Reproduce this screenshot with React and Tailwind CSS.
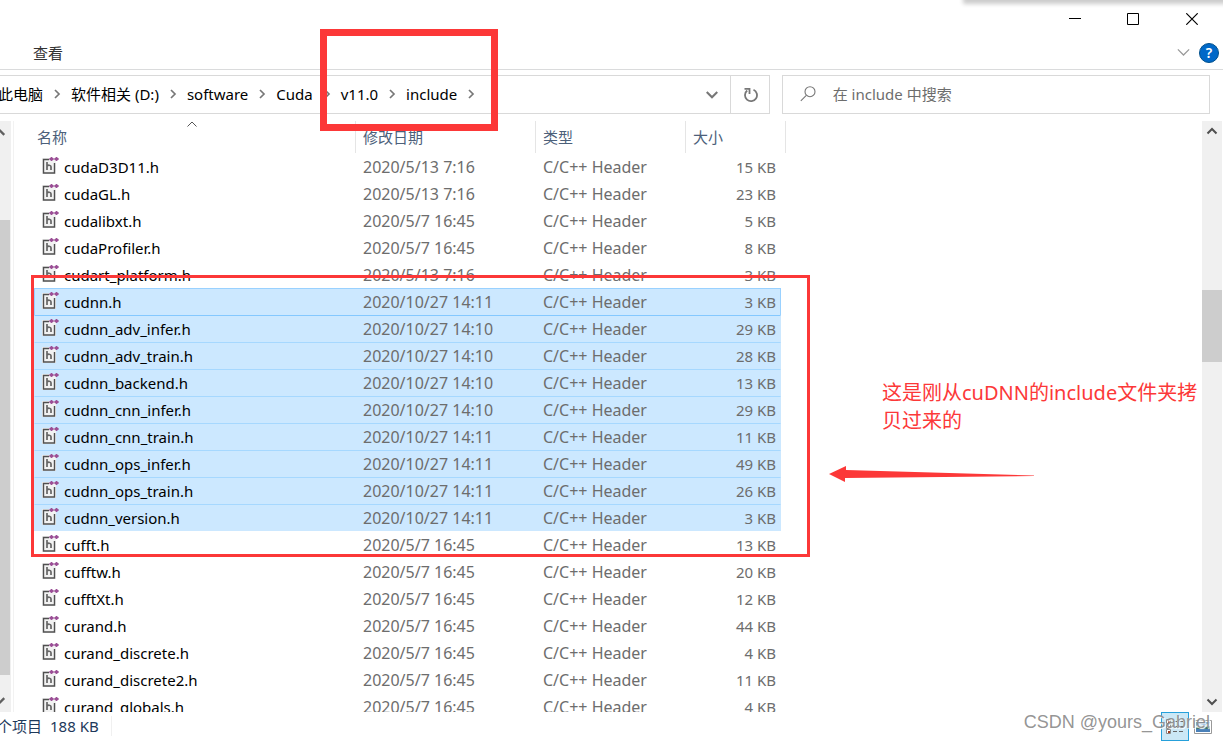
import React, { useState } from "react";

const files = [
  ["cudaD3D11.h", "2020/5/13 7:16", "15 KB"],
  ["cudaGL.h", "2020/5/13 7:16", "23 KB"],
  ["cudalibxt.h", "2020/5/7 16:45", "5 KB"],
  ["cudaProfiler.h", "2020/5/7 16:45", "8 KB"],
  ["cudart_platform.h", "2020/5/13 7:16", "3 KB"],
  ["cudnn.h", "2020/10/27 14:11", "3 KB"],
  ["cudnn_adv_infer.h", "2020/10/27 14:10", "29 KB"],
  ["cudnn_adv_train.h", "2020/10/27 14:10", "28 KB"],
  ["cudnn_backend.h", "2020/10/27 14:10", "13 KB"],
  ["cudnn_cnn_infer.h", "2020/10/27 14:10", "29 KB"],
  ["cudnn_cnn_train.h", "2020/10/27 14:11", "11 KB"],
  ["cudnn_ops_infer.h", "2020/10/27 14:11", "49 KB"],
  ["cudnn_ops_train.h", "2020/10/27 14:11", "26 KB"],
  ["cudnn_version.h", "2020/10/27 14:11", "3 KB"],
  ["cufft.h", "2020/5/7 16:45", "13 KB"],
  ["cufftw.h", "2020/5/7 16:45", "20 KB"],
  ["cufftXt.h", "2020/5/7 16:45", "12 KB"],
  ["curand.h", "2020/5/7 16:45", "44 KB"],
  ["curand_discrete.h", "2020/5/7 16:45", "4 KB"],
  ["curand_discrete2.h", "2020/5/7 16:45", "11 KB"],
  ["curand_globals.h", "2020/5/7 16:45", "4 KB"],
];

const path = ["此电脑", "软件相关 (D:)", "software", "Cuda", "v11.0", "include"];

const Chevron = ({ className, d, size = 12, width = 2 }) => (
  <svg
    className={className}
    width={size}
    height={size}
    viewBox="0 0 12 12"
    fill="none"
    stroke="currentColor"
    strokeWidth={width}
  >
    <path d={d} />
  </svg>
);

const UP = "M1.5 8.5 6 4l4.5 4.5";
const DOWN = "M1.5 3.5 6 8l4.5-4.5";
const RIGHT = "M4 2l4 4-4 4";

const HeaderFileIcon = () => (
  <svg className="shrink-0" width="17" height="17" viewBox="0 0 17 17" fill="none">
    <path d="M0 1h14v16H0z" fill="#f2f2f2" />
    <path d="M4 16H1.5V2.5H7M12.5 6v10H4" stroke="#505050" strokeWidth="1.4" />
    <path d="M5 5v8M5 9.2c.6-1.2 4-1.6 4 .6V13" stroke="#666" strokeWidth="1.7" />
    <path d="M7.4 2h4.2M9.5 0v4M12.4 2h4.2M14.5 0v4" stroke="#9b4f96" strokeWidth="1.8" />
  </svg>
);

const TitleBar = () => (
  <div className="flex h-[38px] shrink-0 justify-end pr-px text-black">
    <button aria-label="最小化" className="flex w-[58px] items-center justify-center">
      <svg width="12" height="12" stroke="currentColor">
        <path d="M0 5.5h12" />
      </svg>
    </button>
    <button aria-label="最大化" className="flex w-[58px] items-center justify-center">
      <svg width="12" height="12" fill="none" stroke="currentColor">
        <path d="M.5.5h11v11H.5z" />
      </svg>
    </button>
    <button aria-label="关闭" className="flex w-[60px] items-center justify-center">
      <svg width="12" height="12" stroke="currentColor" strokeWidth="1.2">
        <path d="M.3.3l11.4 11.4M11.7.3L.3 11.7" />
      </svg>
    </button>
  </div>
);

const Ribbon = () => (
  <div className="flex h-8 shrink-0 items-center justify-between border-b border-[#dadbdc] pr-1 pb-[2px] pl-[33px]">
    <button className="text-[#333]">查看</button>
    <div className="flex items-center gap-2">
      <button aria-label="展开功能区" className="text-[#999]">
        <Chevron d={DOWN} size={15} width={1} />
      </button>
      <button
        aria-label="帮助"
        className="flex size-5 items-center justify-center rounded-full border border-[#00508c] bg-[#0068c8] text-sm font-semibold text-white"
      >
        ?
      </button>
    </div>
  </div>
);

const AddressBar = ({ query, setQuery }) => (
  <div className="mt-[5px] mr-[13px] flex h-[39px] shrink-0 gap-3">
    <div className="flex min-w-0 flex-1 border border-l-0 border-[#d9d9d9]">
      <nav className="-ml-[2px] flex flex-1 items-center pb-[2px] whitespace-nowrap text-black">
        {path.map((part) => (
          <React.Fragment key={part}>
            <a href="#">{part}</a>
            <span className="flex w-7 justify-center text-[#777]">
              <Chevron d={RIGHT} width={1.7} />
            </span>
          </React.Fragment>
        ))}
      </nav>
      <button aria-label="历史记录" className="flex w-9 items-center justify-center text-[#777]">
        <Chevron d={DOWN} size={14} width={1.8} />
      </button>
      <button
        aria-label="刷新"
        className="flex w-[39px] items-center justify-center border-l border-[#d9d9d9] text-[#777]"
      >
        <svg width="16" height="16" viewBox="0 0 16 16" fill="none" stroke="currentColor" strokeWidth="1.8">
          <path d="M11.5 2.7a6 6 0 1 1-6.3.8" />
          <path d="M2.5 1.9h5v5" />
        </svg>
      </button>
    </div>
    <label className="flex w-[35.4%] items-center border border-[#d9d9d9] pb-[2px] pl-[17px] text-[#777]">
      <svg className="shrink-0" width="16" height="16" fill="none" stroke="currentColor" strokeWidth="1.1">
        <circle cx="10" cy="5.7" r="5" />
        <path d="M6.3 9.3.8 14.8" />
      </svg>
      <input
        aria-label="搜索"
        placeholder="在 include 中搜索"
        className="ml-[17px] min-w-0 flex-1 outline-none placeholder:text-[#6d6d6d]"
        value={query}
        onChange={(e) => setQuery(e.target.value)}
      />
    </label>
  </div>
);

const NavScrollbar = () => (
  <div className="flex w-[11px] shrink-0 flex-col overflow-hidden bg-[#f0f0f0] text-[#606060]">
    <Chevron className="mt-1 -ml-2 shrink-0" d={UP} size={14} />
    <div className="mt-[81px] mr-px h-[455px] shrink-0 bg-[#cdcdcd]" />
    <Chevron className="mt-[19px] -ml-2 shrink-0" d={DOWN} size={14} />
  </div>
);

const ListScrollbar = () => (
  <div className="mr-px flex w-5 shrink-0 flex-col items-center bg-[#f0f0f0] text-[#505050]">
    <Chevron className="mt-1 shrink-0" d={UP} />
    <div className="mt-[153px] h-[72px] w-full shrink-0 bg-[#cdcdcd]" />
    <Chevron className="mt-auto mb-1 shrink-0" d={DOWN} />
  </div>
);

const FileList = ({ selected, onSelect }) => {
  // the first selected row has focus: full outline, shared with the row below
  const rowColor = (name) => {
    if (!selected.includes(name)) return "border-transparent";
    if (name === selected[0]) return "border-[#99d1ff] bg-[#cce8ff]";
    if (name === selected[1]) return "border-t-[#84c8ff] border-x-[#cce8ff] bg-[#cce8ff]";
    return "border-t-[#a6d8ff] border-x-[#cce8ff] bg-[#cce8ff]";
  };

  return (
    <div className="min-w-0 flex-1 overflow-hidden border-l border-[#f2f2f2]">
      <table className="ml-5 w-[752px] table-fixed border-separate border-spacing-0">
        <colgroup>
          <col className="w-[322px]" />
          <col className="w-[180px]" />
          <col className="w-[150px]" />
          <col className="w-[95px]" />
          <col className="w-[5px]" />
        </colgroup>
        <thead>
          <tr className="h-8 text-left text-[#4c607a]">
            <th className="relative border-r border-[#e5e5e5] p-0 pl-[3px] font-normal">
              <button>名称</button>
              <Chevron className="absolute top-[-3px] left-[152px] text-[#555]" d={UP} width={1} />
            </th>
            <th className="border-r border-[#e5e5e5] p-0 pl-[7px] font-normal">
              <button>修改日期</button>
            </th>
            <th className="border-r border-[#e5e5e5] p-0 pl-[7px] font-normal">
              <button>类型</button>
            </th>
            <th colSpan={2} className="border-r border-[#e5e5e5] p-0 pl-[7px] font-normal">
              <button>大小</button>
            </th>
          </tr>
        </thead>
        <tbody className="text-[#6d6d6d]">
          {files.map(([name, date, size]) => {
            const color = rowColor(name);
            return (
              <tr key={name} className="h-[27px]" onClick={() => onSelect([name])}>
                <td className={`border-t border-l p-0 pl-[7px] text-black ${color}`}>
                  <div className="flex items-start gap-[5px]">
                    <HeaderFileIcon />
                    {name}
                  </div>
                </td>
                <td className={`border-t p-0 pl-[7px] text-base leading-5 ${color}`}>{date}</td>
                <td className={`border-t p-0 pl-[7px] text-base leading-5 ${color}`}>C/C++ Header</td>
                <td className={`border-t border-r p-0 pr-1 text-right ${color}`}>{size}</td>
                <td className="p-0" />
              </tr>
            );
          })}
        </tbody>
      </table>
    </div>
  );
};

const StatusBar = () => (
  <div className="flex h-[30px] shrink-0 items-start justify-between pr-[11px] text-[#1e395b]">
    <div className="-ml-[3px] mt-1 flex h-5 items-center gap-2 border-r border-[#f0f0f0] pr-3 whitespace-nowrap">
      <span>个项目</span>
      <span>188 KB</span>
    </div>
    <div className="flex items-center gap-[5px]">
      <button
        aria-label="详细信息"
        className="flex h-[29px] w-7 items-center justify-center border border-[#26a0da] bg-[#cbe8f6]"
      >
        <svg width="18" height="16" fill="none">
          {[0, 5, 10].map((y) => (
            <g key={y}>
              <path d={`M.5 ${y + 0.5}h4v4h-4z`} fill="#fff" stroke="#888" />
              <path d={`M2 ${y + 2}h2v2H2z`} fill="#a33c1e" />
              <path d={`M7 ${y + 2.5}h4M13 ${y + 2.5}h4`} stroke="#666" />
            </g>
          ))}
        </svg>
      </button>
      <button aria-label="大缩略图">
        <svg width="18" height="14">
          <path d="M.5.5h17v13H.5z" fill="#fff" stroke="#999" />
          <path d="M2 2h14v5H2z" fill="#6fa6de" />
          <path d="M2 6l4-2 4 1 6-2v4H2z" fill="#e3f0f8" />
          <path d="M2 7.5l5 .5 9-2v3H2z" fill="#3c7466" />
          <path d="M2 9h14v3H2z" fill="#4a80b8" />
        </svg>
      </button>
    </div>
  </div>
);

// red marks drawn over the window
const Annotations = () => (
  <div className="pointer-events-none absolute inset-0 overflow-hidden text-[#fc3838]">
    <div className="absolute top-[29px] left-[320px] h-[102px] w-[178px] border-7 border-[#fc3838]" />
    <div className="absolute top-[275px] left-[31px] h-[282px] w-[779px] border-3 border-[#fc3838]" />
    <p className="absolute top-[379px] left-[882px] w-[324px] text-xl leading-7 break-all">
      这是刚从cuDNN的include文件夹拷贝过来的
    </p>
    <svg className="absolute top-[465px] left-[829px]" width="206" height="18" fill="currentColor">
      <path d="M0 9 17 1v4l188 5.5v.6L16 13v4z" />
    </svg>
    <div className="absolute top-[-4px] right-[-8px] h-1 w-[264px] shadow-[0_0_4px_4px_#ccc]" />
    <span className="absolute right-[13px] bottom-2 font-['Liberation_Sans',sans-serif] text-lg leading-6 text-[#888]/90 [text-shadow:1px_1px_1px_#fff]">
      CSDN @yours_Gabriel
    </span>
  </div>
);

const App = () => {
  const [query, setQuery] = useState("");
  const [selected, setSelected] = useState(files.slice(5, 14).map(([name]) => name));

  return (
    <div className="relative flex h-screen flex-col overflow-hidden bg-white font-['Noto_Sans','Noto_Sans_CJK_SC',sans-serif] text-[15px] leading-5">
      <TitleBar />
      <Ribbon />
      <AddressBar query={query} setQuery={setQuery} />
      <div className="mt-[7px] flex min-h-0 flex-1">
        <NavScrollbar />
        <div className="w-[2px]" />
        <FileList selected={selected} onSelect={setSelected} />
        <ListScrollbar />
      </div>
      <StatusBar />
      <Annotations />
    </div>
  );
};

export default App;
